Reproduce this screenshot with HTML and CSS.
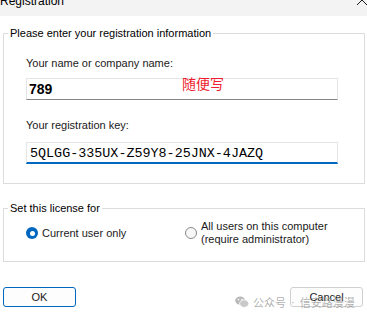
FILE: index.html
```html
<!DOCTYPE html>
<html>
<head>
<meta charset="utf-8">
<link rel="stylesheet" href="styles.css">
</head>
<body>
<div class="window">
  <div class="titlebar">
    <div class="title">Registration</div>
    <svg class="close" width="12" height="12" viewBox="0 0 12 12"><path d="M1 -5 L11 5 M11 -5 L1 5" stroke="#1a1a1a" stroke-width="1" fill="none"/></svg>
  </div>

  <fieldset class="group">
    <legend>Please enter your registration information</legend>
    <div class="group-body info-body">
      <div class="label">Your name or company name:</div>
      <div class="field field-name">789<span class="note">随便写</span></div>
      <div class="label label-key">Your registration key:</div>
      <div class="field field-key">5QLGG-335UX-Z59Y8-25JNX-4JAZQ</div>
    </div>
  </fieldset>

  <fieldset class="group group-license">
    <legend>Set this license for</legend>
    <div class="group-body options">
      <div class="option option-first">
        <span class="radio checked"></span>
        <span class="opt-text">Current user only</span>
      </div>
      <div class="option">
        <span class="radio"></span>
        <span class="opt-text">All users on this computer<br>(require administrator)</span>
      </div>
    </div>
  </fieldset>

  <div class="buttons">
    <div class="btn btn-default">OK</div>
    <div class="btn">Cancel</div>
  </div>

  <div class="watermark">
    <svg width="14" height="12" viewBox="0 0 14 12"><ellipse cx="5.2" cy="4.6" rx="5" ry="4.2" fill="#b9b9b9"/><ellipse cx="9.2" cy="7.6" rx="4.6" ry="3.8" fill="#c9c9c9" stroke="#fff" stroke-width="0.8"/><circle cx="3.5" cy="3.6" r="0.8" fill="#fff"/><circle cx="6.9" cy="3.6" r="0.8" fill="#fff"/></svg>
    <span class="wm-a">公众号</span><span class="wm-dot">·</span><span class="wm-b">信安路漫漫</span>
  </div>
</div>
</body>
</html>
```
FILE: styles.css
```css
html, body {
  margin: 0;
  padding: 0;
  background: #ffffff;
}
.window {
  position: relative;
  width: 367px;
  height: 318px;
  overflow: hidden;
  font-family: "Liberation Sans", Arial, sans-serif;
  font-size: 11px;
  color: #000;
}
.titlebar {
  height: 16px;
  background: #f3f3f3;
  display: flex;
  justify-content: space-between;
  align-items: flex-start;
  overflow: hidden;
}
.title {
  font-size: 12px;
  line-height: 12px;
  margin-top: -5px;
  color: #000;
}
.close {
  margin-right: -1px;
}
.group {
  margin: 10px 2px 0 3px;
  padding: 0;
  border: 1px solid #dcdcdc;
  min-width: 0;
}
.group legend {
  margin-left: 4px;
  padding: 0 2px;
  line-height: 14px;
  font-size: 11px;
}
.info-body {
  padding: 0 26px 19px 22px;
}
.label {
  margin-top: 15px;
  line-height: 16px;
  color: #1a1a1a;
}
.label-key {
  margin-top: 17px;
}
.field {
  box-sizing: border-box;
  height: 22px;
  border: 1px solid #e5e5e5;
  border-bottom: 1px solid #868686;
  padding-left: 2px;
  display: flex;
  align-items: center;
  background: #fff;
  position: relative;
}
.field-name {
  margin-top: 7px;
  font-weight: bold;
  font-size: 14px;
}
.field-key {
  margin-top: 9px;
  border-bottom: 2px solid #0067c0;
  padding-left: 3px;
  padding-top: 1px;
  font-family: "Liberation Mono", "Courier New", monospace;
  font-size: 13.4px;
}
.note {
  position: absolute;
  left: 155px;
  top: -4px;
  font-family: "Noto Sans CJK SC", sans-serif;
  font-weight: normal;
  font-size: 14px;
  line-height: 16px;
  color: #ee1c2e;
}
.group-license {
  margin-top: 17px;
}
.options {
  display: flex;
  align-items: center;
  min-height: 26px;
  padding: 5px 0 15px 22px;
}
.option {
  display: flex;
  align-items: center;
  gap: 4px;
}
.option-first {
  flex: 0 0 159px;
}
.radio {
  box-sizing: border-box;
  width: 12px;
  height: 12px;
  border-radius: 50%;
  border: 1px solid #8a8a8a;
  background: #f7f7f7;
  flex: none;
  position: relative;
}
.radio.checked {
  border: none;
  background: #0067c0;
}
.radio.checked::after {
  content: "";
  position: absolute;
  left: 3.5px;
  top: 3.5px;
  width: 5px;
  height: 5px;
  border-radius: 50%;
  background: #fff;
}
.opt-text {
  line-height: 13px;
  color: #1a1a1a;
}
.buttons {
  display: flex;
  justify-content: space-between;
  margin-top: 25px;
  padding: 0 4px 0 3px;
}
.btn {
  box-sizing: border-box;
  width: 73px;
  height: 20px;
  border: 1px solid #d0d0d0;
  border-radius: 3px;
  background: #fdfdfd;
  display: flex;
  align-items: center;
  justify-content: center;
  color: #1a1a1a;
}
.btn-default {
  border: 1px solid #0067c0;
}
.watermark {
  position: absolute;
  left: 235px;
  top: 294px;
  display: flex;
  align-items: center;
  font-family: "Noto Sans CJK SC", sans-serif;
  font-size: 11px;
  line-height: 16px;
  color: rgba(150, 150, 150, 0.75);
}
.wm-a {
  margin-left: 4px;
}
.wm-dot {
  font-family: "Liberation Sans", sans-serif;
  margin: 0 5px;
}
```
